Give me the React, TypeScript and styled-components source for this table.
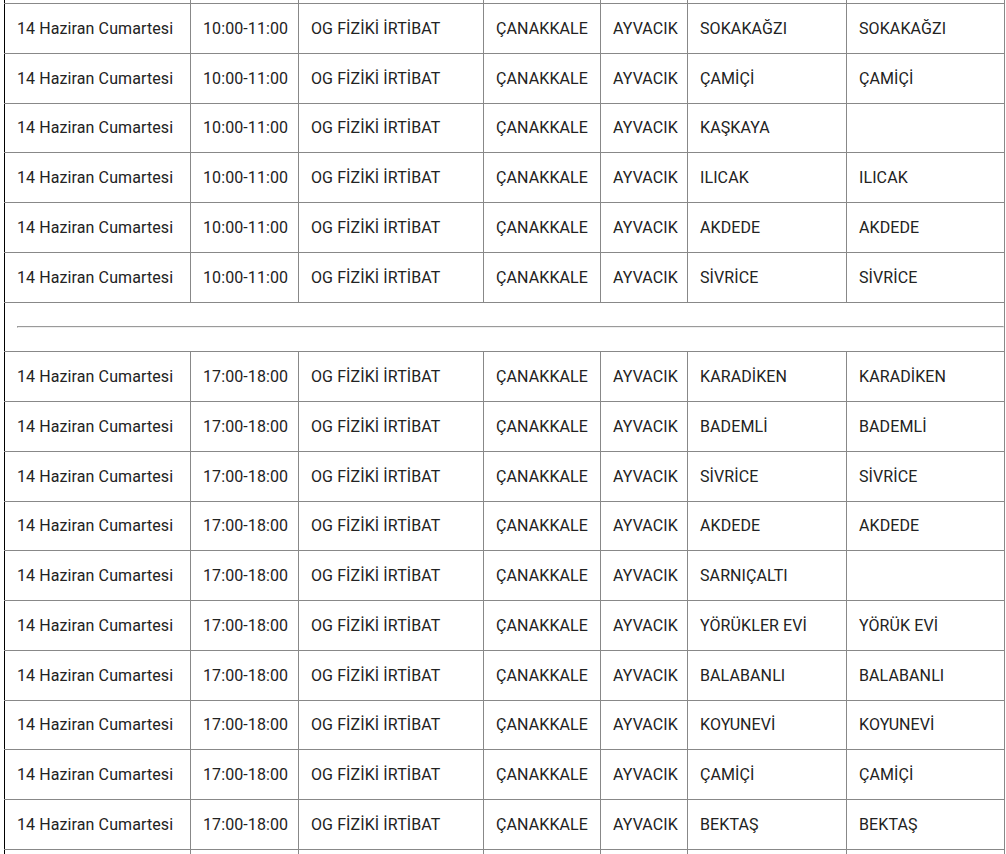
import React from 'react';
import styled, { createGlobalStyle } from 'styled-components';

const GlobalStyle = createGlobalStyle`
  body {
    margin: 0;
    background: #fff;
    font-family: Roboto, "Liberation Sans", Arial, sans-serif;
  }
`;

// the page is scrolled: only the bottom of the previous row shows
const Page = styled.div`
  padding-left: 4px;
  margin-top: -46.75px;
`;

const Table = styled.table`
  width: 1000px;
  table-layout: fixed;
  border-collapse: collapse;
  font-size: 16px;
  letter-spacing: 0.1px;
  color: #222;
`;

const Cell = styled.td`
  height: 48.75px;
  padding: 0 12px;
  border: 1px solid #888;
  vertical-align: middle;
  white-space: nowrap;
  overflow: hidden;

  &:first-child {
    border-left-color: #000;
  }
`;

const SeparatorCell = styled(Cell)`
  padding: 0 0 0 12px;
`;

const Rule = styled.hr`
  margin: 0;
`;

type Row = [string, string, string];

const morning: Row[] = [
  ['10:00-11:00', 'SOKAKAĞZI', 'SOKAKAĞZI'],
  ['10:00-11:00', 'ÇAMİÇİ', 'ÇAMİÇİ'],
  ['10:00-11:00', 'KAŞKAYA', ''],
  ['10:00-11:00', 'ILICAK', 'ILICAK'],
  ['10:00-11:00', 'AKDEDE', 'AKDEDE'],
  ['10:00-11:00', 'SİVRİCE', 'SİVRİCE'],
];

const evening: Row[] = [
  ['17:00-18:00', 'KARADİKEN', 'KARADİKEN'],
  ['17:00-18:00', 'BADEMLİ', 'BADEMLİ'],
  ['17:00-18:00', 'SİVRİCE', 'SİVRİCE'],
  ['17:00-18:00', 'AKDEDE', 'AKDEDE'],
  ['17:00-18:00', 'SARNIÇALTI', ''],
  ['17:00-18:00', 'YÖRÜKLER EVİ', 'YÖRÜK EVİ'],
  ['17:00-18:00', 'BALABANLI', 'BALABANLI'],
  ['17:00-18:00', 'KOYUNEVİ', 'KOYUNEVİ'],
  ['17:00-18:00', 'ÇAMİÇİ', 'ÇAMİÇİ'],
  ['17:00-18:00', 'BEKTAŞ', 'BEKTAŞ'],
];

const widths = [186, 108, 185, 117, 87, 159, 158];

const DataRow: React.FC<{ row: Row }> = ({ row }) => (
  <tr>
    <Cell>14 Haziran Cumartesi</Cell>
    <Cell>{row[0]}</Cell>
    <Cell>OG FİZİKİ İRTİBAT</Cell>
    <Cell>ÇANAKKALE</Cell>
    <Cell>AYVACIK</Cell>
    <Cell>{row[1]}</Cell>
    <Cell>{row[2]}</Cell>
  </tr>
);

// rows cut by the window edge: only their borders are in view
const EdgeRow: React.FC = () => (
  <tr>
    {widths.map((_, i) => (
      <Cell key={i} />
    ))}
  </tr>
);

export default function App() {
  return (
    <>
      <GlobalStyle />
      <Page>
        <Table>
          <colgroup>
            {widths.map((w, i) => (
              <col key={i} style={{ width: w }} />
            ))}
          </colgroup>
          <tbody>
            <EdgeRow />
            {morning.map((r, i) => (
              <DataRow key={'m' + i} row={r} />
            ))}
            <tr>
              <SeparatorCell colSpan={7}>
                <Rule />
              </SeparatorCell>
            </tr>
            {evening.map((r, i) => (
              <DataRow key={'e' + i} row={r} />
            ))}
            <EdgeRow />
          </tbody>
        </Table>
      </Page>
    </>
  );
}
